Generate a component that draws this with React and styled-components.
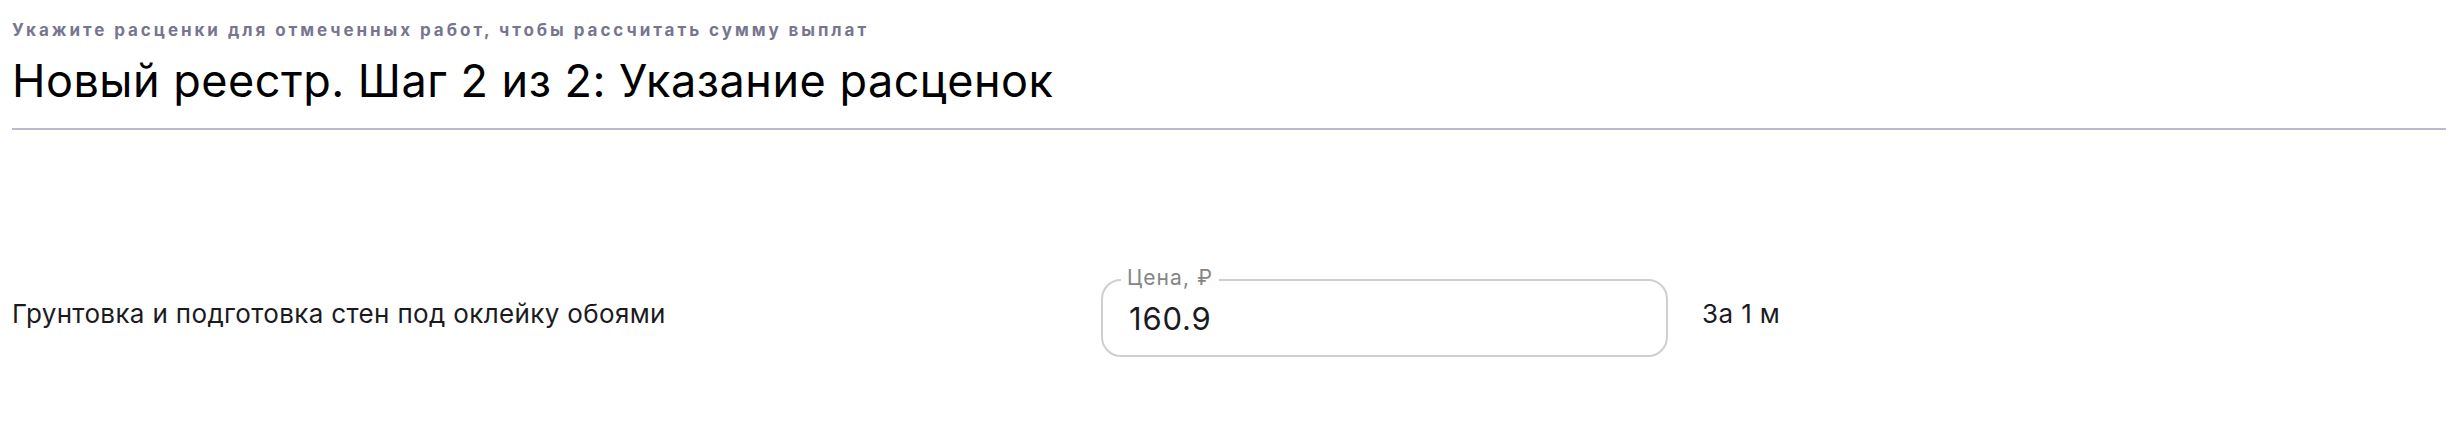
import styled, { createGlobalStyle } from "styled-components";

const GlobalStyle = createGlobalStyle`
  body {
    margin: 0;
    background: #ffffff;
    font-family: Inter, "Noto Sans", sans-serif;
  }
`;

export default function App() {
  return (
    <Page>
      <GlobalStyle />
      <Header>
        <Hint>Укажите расценки для отмеченных работ, чтобы рассчитать сумму выплат</Hint>
        <Title>Новый реестр. Шаг 2 из 2: Указание расценок</Title>
      </Header>
      <Row>
        <WorkName>Грунтовка и подготовка стен под оклейку обоями</WorkName>
        <Field>
          <FieldLabel>Цена, ₽</FieldLabel>
          <FieldInput defaultValue="160.9" />
        </Field>
        <Unit>За 1 м</Unit>
      </Row>
    </Page>
  );
}

const Page = styled.div`
  padding-left: 12px;
  color: #111;
`;

const Header = styled.div`
  padding-top: 20px;
  padding-bottom: 19px;
  border-bottom: 2px solid #bdbacd;
`;

const Hint = styled.div`
  font-size: 17px;
  line-height: 20px;
  font-weight: 700;
  letter-spacing: 2.95px;
  color: #77768f;
`;

const Title = styled.h1`
  margin: 13px 0 0;
  font-size: 45px;
  line-height: 56px;
  font-weight: 400;
  letter-spacing: 0.5px;
  color: #000;
`;

const Row = styled.div`
  display: flex;
  align-items: center;
  margin-top: 149px;
`;

const WorkName = styled.div`
  width: 1089px;
  margin-bottom: 10px;
  font-size: 26px;
  letter-spacing: 0.35px;
  color: #1b1b1f;
`;

const Field = styled.div`
  position: relative;
  box-sizing: border-box;
  width: 567px;
  height: 78px;
  border: 2px solid #cfcfcf;
  border-radius: 20px;
  display: flex;
  align-items: center;
  padding: 0 26px;
`;

const FieldLabel = styled.span`
  position: absolute;
  top: -15px;
  left: 18px;
  padding: 0 6px;
  background: #fff;
  font-size: 21px;
  line-height: 24px;
  letter-spacing: 1.1px;
  color: #858585;
`;

const FieldInput = styled.input`
  border: none;
  outline: none;
  padding: 0;
  width: 100%;
  background: transparent;
  font-family: inherit;
  font-size: 31px;
  letter-spacing: 0.8px;
  color: #1b1b1f;
`;

const Unit = styled.div`
  margin-left: 34px;
  margin-bottom: 10px;
  font-size: 26px;
  letter-spacing: 0.4px;
  color: #1b1b1f;
`;
